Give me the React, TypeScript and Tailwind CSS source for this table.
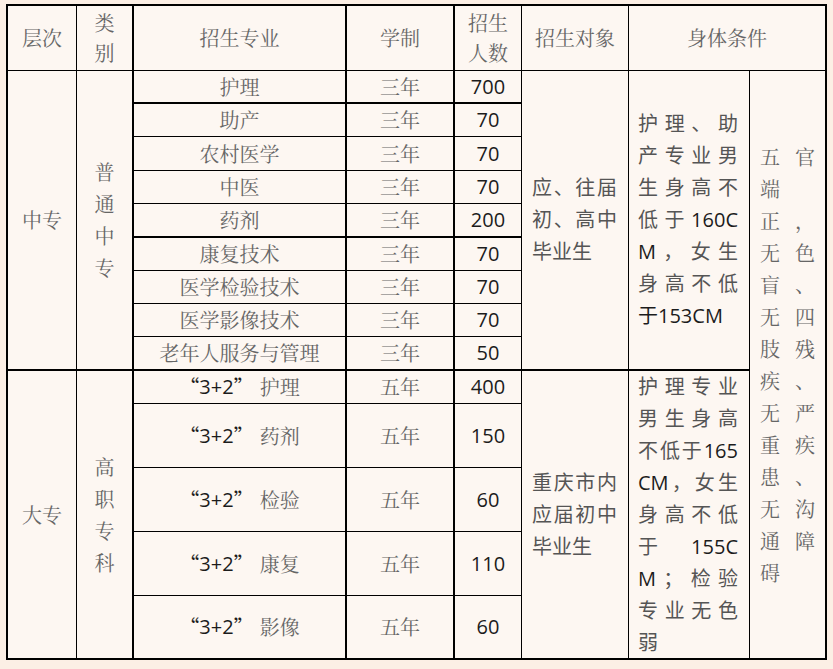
import React from "react";

type Row = { name: string; years: string; count: string; thick?: boolean };

const zhongzhuan: Row[] = [
  { name: "护理", years: "三年", count: "700", thick: true },
  { name: "助产", years: "三年", count: "70" },
  { name: "农村医学", years: "三年", count: "70" },
  { name: "中医", years: "三年", count: "70" },
  { name: "药剂", years: "三年", count: "200", thick: true },
  { name: "康复技术", years: "三年", count: "70" },
  { name: "医学检验技术", years: "三年", count: "70" },
  { name: "医学影像技术", years: "三年", count: "70" },
  { name: "老年人服务与管理", years: "三年", count: "50", thick: true },
];

const dazhuan: Row[] = [
  { name: "护理", years: "五年", count: "400" },
  { name: "药剂", years: "五年", count: "150" },
  { name: "检验", years: "五年", count: "60" },
  { name: "康复", years: "五年", count: "110" },
  { name: "影像", years: "五年", count: "60", thick: true },
];

const song = "font-['Noto_Serif_CJK_SC','Noto_Sans_CJK_SC',serif] text-[#666666]";
const num = "font-['Open_Sans','Noto_Sans_CJK_SC',sans-serif] text-[#1c1c1c]";
const mixed = "font-['Open_Sans','Noto_Sans_CJK_SC',sans-serif] text-[#555555]";

const cell = "flex items-center justify-center border-black overflow-hidden text-[20px]";

// one line of justified text, each item pushed apart
const Line = ({ items, left }: { items: string[]; left?: boolean }) => (
  <div className={`flex h-[32px] leading-[32px] whitespace-nowrap ${left ? "justify-start" : "justify-between"}`}>
    {items.map((t, i) => (
      <span key={i} className={/[0-9A-Z]/.test(t) ? "text-[#1c1c1c]" : ""}>
        {t}
      </span>
    ))}
  </div>
);

const Stack = ({ lines, className }: { lines: string[][]; className: string }) => (
  <div className={`flex flex-col justify-center border-black overflow-visible text-[20px] ${className}`}>
    {lines.map((l, i) => (
      <Line key={i} items={l} left={l.length === 1} />
    ))}
  </div>
);

const Major = ({ name, plus }: { name: string; plus?: boolean }) =>
  plus ? (
    <span className="flex items-center whitespace-nowrap">
      <span className="font-['Noto_Sans_CJK_SC',sans-serif] text-[#1c1c1c]">“</span>
      <span className={num}>3+2</span>
      <span className="font-['Noto_Sans_CJK_SC',sans-serif] text-[#1c1c1c]">”</span>
      <span className={`${song} ml-[6px]`}>{name}</span>
    </span>
  ) : (
    <span className={`${song} whitespace-nowrap`}>{name}</span>
  );

export default function App() {
  return (
    <div className="w-[833px] h-[669px] bg-[#fcefe5] pt-[4px] pl-[6px]">
      <div className="grid w-fit border-l-2 border-t-2 border-black bg-[#fdf7f2] grid-cols-[69px_57px_213px_108px_67px_107px_121px_77px] grid-rows-[65px_33px_33px_34px_33px_34px_33px_33px_33px_34px_33px_64px_64px_64px_64px]">
        {/* header */}
        <div className={`${cell} ${song} border-r border-b`}>层次</div>
        <div className={`${cell} ${song} border-r-2 border-b flex-col leading-[30px]`}>
          <span>类</span>
          <span>别</span>
        </div>
        <div className={`${cell} ${song} border-r-2 border-b`}>招生专业</div>
        <div className={`${cell} ${song} border-r-2 border-b`}>学制</div>
        <div className={`${cell} ${song} border-r border-b flex-col leading-[30px]`}>
          <span>招生</span>
          <span>人数</span>
        </div>
        <div className={`${cell} ${song} border-r border-b`}>招生对象</div>
        <div className={`${cell} ${song} border-r-2 border-b col-span-2`}>身体条件</div>

        {/* 中专 */}
        {zhongzhuan.map((r, i) => {
          const b = r.thick ? "border-b-2" : "border-b";
          return (
            <React.Fragment key={r.name}>
              {i === 0 && (
                <>
                  <div className={`${cell} ${song} row-span-9 border-r border-b-2`}>中专</div>
                  <div className={`${cell} ${song} row-span-9 border-r-2 border-b-2 flex-col leading-[32px]`}>
                    <span>普</span>
                    <span>通</span>
                    <span>中</span>
                    <span>专</span>
                  </div>
                </>
              )}
              <div className={`${cell} border-r-2 ${b}`}>
                <Major name={r.name} />
              </div>
              <div className={`${cell} ${song} border-r-2 ${b}`}>{r.years}</div>
              <div className={`${cell} ${num} border-r ${b}`}>{r.count}</div>
              {i === 0 && (
                <>
                  <Stack
                    className={`${mixed} row-span-9 border-r border-b-2 pl-[10px] pr-[11px]`}
                    lines={[
                      ["应", "、", "往", "届"],
                      ["初", "、", "高", "中"],
                      ["毕业生"],
                    ]}
                  />
                  <Stack
                    className={`${mixed} row-span-9 border-r border-b-2 pl-[9px] pr-[11px]`}
                    lines={[
                      ["护", "理", "、", "助"],
                      ["产", "专", "业", "男"],
                      ["生", "身", "高", "不"],
                      ["低", "于", "160C"],
                      ["M", "，", "女", "生"],
                      ["身", "高", "不", "低"],
                      ["于153CM"],
                    ]}
                  />
                  <Stack
                    className={`${song} row-span-14 border-r-2 border-b-2 px-[10px]`}
                    lines={[
                      ["五", "官"],
                      ["端"],
                      ["正", "，"],
                      ["无", "色"],
                      ["盲", "、"],
                      ["无", "四"],
                      ["肢", "残"],
                      ["疾", "、"],
                      ["无", "严"],
                      ["重", "疾"],
                      ["患", "、"],
                      ["无", "沟"],
                      ["通", "障"],
                      ["碍"],
                    ]}
                  />
                </>
              )}
            </React.Fragment>
          );
        })}

        {/* 大专 */}
        {dazhuan.map((r, i) => {
          const b = r.thick ? "border-b-2" : "border-b";
          return (
            <React.Fragment key={r.name + i}>
              {i === 0 && (
                <>
                  <div className={`${cell} ${song} row-span-5 border-r border-b-2`}>大专</div>
                  <div className={`${cell} ${song} row-span-5 border-r-2 border-b-2 flex-col leading-[32px]`}>
                    <span>高</span>
                    <span>职</span>
                    <span>专</span>
                    <span>科</span>
                  </div>
                </>
              )}
              <div className={`${cell} border-r-2 ${b}`}>
                <Major name={r.name} plus />
              </div>
              <div className={`${cell} ${song} border-r-2 ${b}`}>{r.years}</div>
              <div className={`${cell} ${num} border-r ${b}`}>{r.count}</div>
              {i === 0 && (
                <>
                  <Stack
                    className={`${mixed} row-span-5 border-r border-b-2 pl-[10px] pr-[11px]`}
                    lines={[
                      ["重", "庆", "市", "内"],
                      ["应", "届", "初", "中"],
                      ["毕业生"],
                    ]}
                  />
                  <Stack
                    className={`${mixed} row-span-5 border-r border-b-2 pl-[9px] pr-[11px]`}
                    lines={[
                      ["护", "理", "专", "业"],
                      ["男", "生", "身", "高"],
                      ["不", "低", "于", "165"],
                      ["CM", "，", "女", "生"],
                      ["身", "高", "不", "低"],
                      ["于", "155C"],
                      ["M", "；", "检", "验"],
                      ["专", "业", "无", "色"],
                      ["弱"],
                    ]}
                  />
                </>
              )}
            </React.Fragment>
          );
        })}
      </div>
    </div>
  );
}
